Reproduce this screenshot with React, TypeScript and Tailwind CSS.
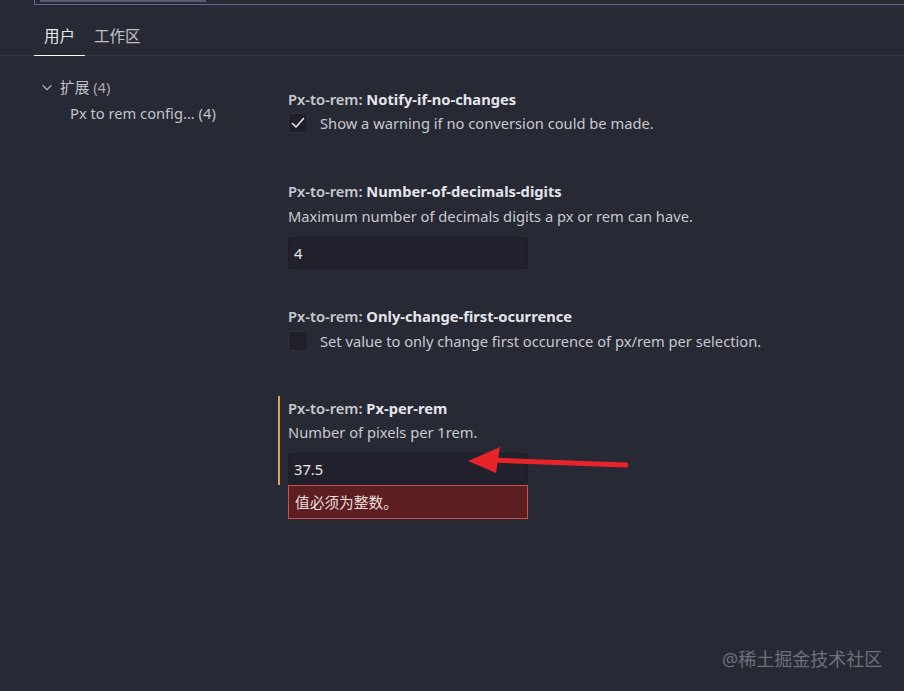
import React from 'react'

function Check() {
  return (
    <svg width="16" height="16" viewBox="0 0 16 16" fill="none">
      <path d="M2.5 8.5 L6 12 L13.5 3.5" stroke="#e6e6e6" strokeWidth="1.6" strokeLinecap="round" strokeLinejoin="round" />
    </svg>
  )
}

function Title({ name }: { name: string }) {
  return (
    <div className="text-[14.7px] leading-[20px] text-[#c8c9cf]">
      <span className="font-semibold">Px-to-rem: </span>
      <span className="font-bold text-[#e4e5ea]">{name}</span>
    </div>
  )
}

export default function App() {
  const font = { fontFamily: '"Noto Sans", "Noto Sans CJK SC", sans-serif' }
  return (
    <div className="w-[904px] h-[691px] bg-[#272935] overflow-hidden relative" style={font}>
      {/* search box (cut off at top) */}
      <div className="ml-[34px] h-[5px] border-b border-l border-[#6a6894] relative">
        <div className="absolute left-[5px] top-0 w-[166px] h-[2px] bg-[#5c5b72]" />
      </div>

      {/* tabs */}
      <div className="flex items-end mt-[20px] pl-[34px] border-b border-[#363845]">
        <div className="px-[10px] pb-[7px] text-[15.5px] text-[#e8e8ec] border-b border-white -mb-px">用户</div>
        <div className="px-[9px] pb-[7px] text-[15.5px] text-[#bfc0c8]">工作区</div>
      </div>

      <div className="flex">
        {/* tree */}
        <div className="w-[278px] pt-[20px] pl-[40px] text-[14.7px] text-[#c3c4cb]">
          <div className="flex items-center h-[22px]">
            <svg width="14" height="14" viewBox="0 0 16 16" className="mr-[6px]">
              <path d="M3 6 L8 11 L13 6" stroke="#b8b9c0" strokeWidth="1.3" fill="none" />
            </svg>
            <span>扩展 <span className="text-[#a7a8b0]">(4)</span></span>
          </div>
          <div className="h-[22px] mt-[4px] pl-[30px] flex items-center">Px to rem config... (4)</div>
        </div>

        {/* settings list */}
        <div className="flex-1 pt-[33px] text-[14.7px]">
          <div className="pl-[10px]">
            <Title name="Notify-if-no-changes" />
            <div className="flex items-center mt-[3px]">
              <div className="w-[20px] h-[20px] rounded-[3px] bg-[#1f2029] border border-[#2f303c] flex items-center justify-center">
                <Check />
              </div>
              <span className="ml-[12px] text-[#c8c9cf]">Show a warning if no conversion could be made.</span>
            </div>
          </div>

          <div className="pl-[10px] mt-[47px]">
            <Title name="Number-of-decimals-digits" />
            <div className="mt-[4px] text-[#c8c9cf]">Maximum number of decimals digits a px or rem can have.</div>
            <div className="mt-[10px] w-[240px] h-[32px] bg-[#20212c] border border-[#1c1d26] flex items-center pl-[5px] text-[#e8e8ec]">4</div>
          </div>

          <div className="pl-[10px] mt-[37px]">
            <Title name="Only-change-first-ocurrence" />
            <div className="flex items-center mt-[4px]">
              <div className="w-[20px] h-[20px] rounded-[3px] bg-[#1f2029] border border-[#2f303c]" />
              <span className="ml-[12px] text-[#c8c9cf]">Set value to only change first occurence of px/rem per selection.</span>
            </div>
          </div>

          <div className="mt-[44px] relative">
            <div className="border-l-2 border-[#d9a54d] pl-[8px] pt-[2px]">
              <Title name="Px-per-rem" />
              <div className="mt-[3px] text-[#c8c9cf]">Number of pixels per 1rem.</div>
              <div className="mt-[10px] w-[240px] h-[32px] bg-[#20212c] border border-[#1c1d26] flex items-center pl-[5px] text-[#e8e8ec]">37.5</div>
            </div>
            <div className="ml-[10px] w-[240px] h-[34px] bg-[#5c1e20] border border-[#c9504f] flex items-center pl-[6px] text-[#ecdede]">值必须为整数。</div>

            {/* annotation arrow */}
            <svg className="absolute left-[180px] top-[50px]" width="170" height="30" viewBox="0 0 170 30">
              <path d="M168 19 L32 14" stroke="#e8232a" strokeWidth="5" strokeLinecap="round" />
              <path d="M10 15 L42 1 L38 27 Z" fill="#e8232a" />
            </svg>
          </div>
        </div>
      </div>

      <div className="absolute left-[722px] top-[646px] text-[18px] text-[#6e707b]">@稀土掘金技术社区</div>
    </div>
  )
}
